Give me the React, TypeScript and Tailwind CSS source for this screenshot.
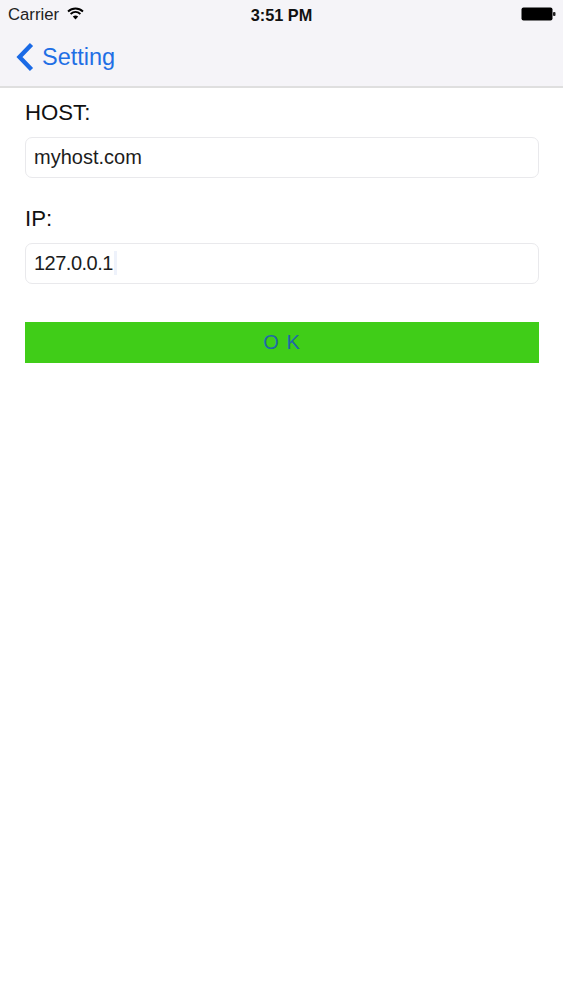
import React from "react";

const font = { fontFamily: '"Liberation Sans", Arial, sans-serif' };

const Field = ({ label, value, cursor }: { label: string; value: string; cursor?: boolean }) => (
  <div>
    <div className="text-[22.2px] leading-[26px] text-[#111]">{label}</div>
    <div className="mt-[11px] h-[41px] flex items-center px-[8px] pb-[2px] bg-white border border-[#e9e9ec] rounded-[7px] text-[20px] text-[#1c1c1c]">
      <span className={cursor ? "tracking-[-0.5px]" : ""}>{value}</span>
      {cursor && <span className="ml-[1px] w-[3px] h-[24px] bg-[#eef2fb]" />}
    </div>
  </div>
);

const App = () => {
  return (
    <div className="w-[563px] h-[1000px] bg-white overflow-hidden" style={font}>
      {/* Status + nav bar */}
      <div className="h-[88px] bg-[#f5f4f8] border-b-2 border-[#dfdfdf]">
        <div className="h-[30px] grid grid-cols-3 items-center pl-2 pr-[7px]">
          <div className="flex items-center gap-2 text-[16.7px] text-[#222]">
            Carrier
            <svg width="17" height="13" viewBox="0 0 17 13" className="mb-[3px]">
              <path d="M1 4.5C5.5 .4 11.5 .4 16 4.5" fill="none" stroke="#000" strokeWidth="1.9" />
              <path d="M3.6 7C6.6 4.4 10.4 4.4 13.4 7" fill="none" stroke="#000" strokeWidth="1.9" />
              <path d="M5.8 9.4C7.5 8.1 9.5 8.1 11.2 9.4L8.5 12.4Z" fill="#000" />
            </svg>
          </div>
          <div className="text-center text-[16.3px] font-bold text-[#111] pr-[1px]">3:51 PM</div>
          <div className="flex justify-end mb-[2px]">
            <svg width="35" height="14" viewBox="0 0 35 14">
              <rect x="0.5" y="0.5" width="31" height="13" rx="2" fill="#000" />
              <rect x="32" y="5" width="2.5" height="4" rx="1" fill="#222" />
            </svg>
          </div>
        </div>
        <div className="h-[56px] flex items-center pl-[16px] pb-[2px] text-[#1f6fe5] text-[23.5px]">
          <svg width="19" height="30" viewBox="0 0 19 30">
            <path d="M15.5 2.5L3.5 15L15.5 27.5" fill="none" stroke="#1a6ae6" strokeWidth="4.4" />
          </svg>
          <span className="ml-[7px] mt-[1px]">Setting</span>
        </div>
      </div>

      {/* Form */}
      <div className="pl-[25px] pr-[24px] pt-[12px]">
        <Field label="HOST:" value="myhost.com" />
        <div className="mt-[28px]">
          <Field label="IP:" value="127.0.0.1" cursor />
        </div>
        <button className="mt-[38px] pb-[2px] w-full h-[41px] bg-[#40cd18] text-[#1f68a8] text-[20px] tracking-[1px]">
          O K
        </button>
      </div>
    </div>
  );
};

export default App;
